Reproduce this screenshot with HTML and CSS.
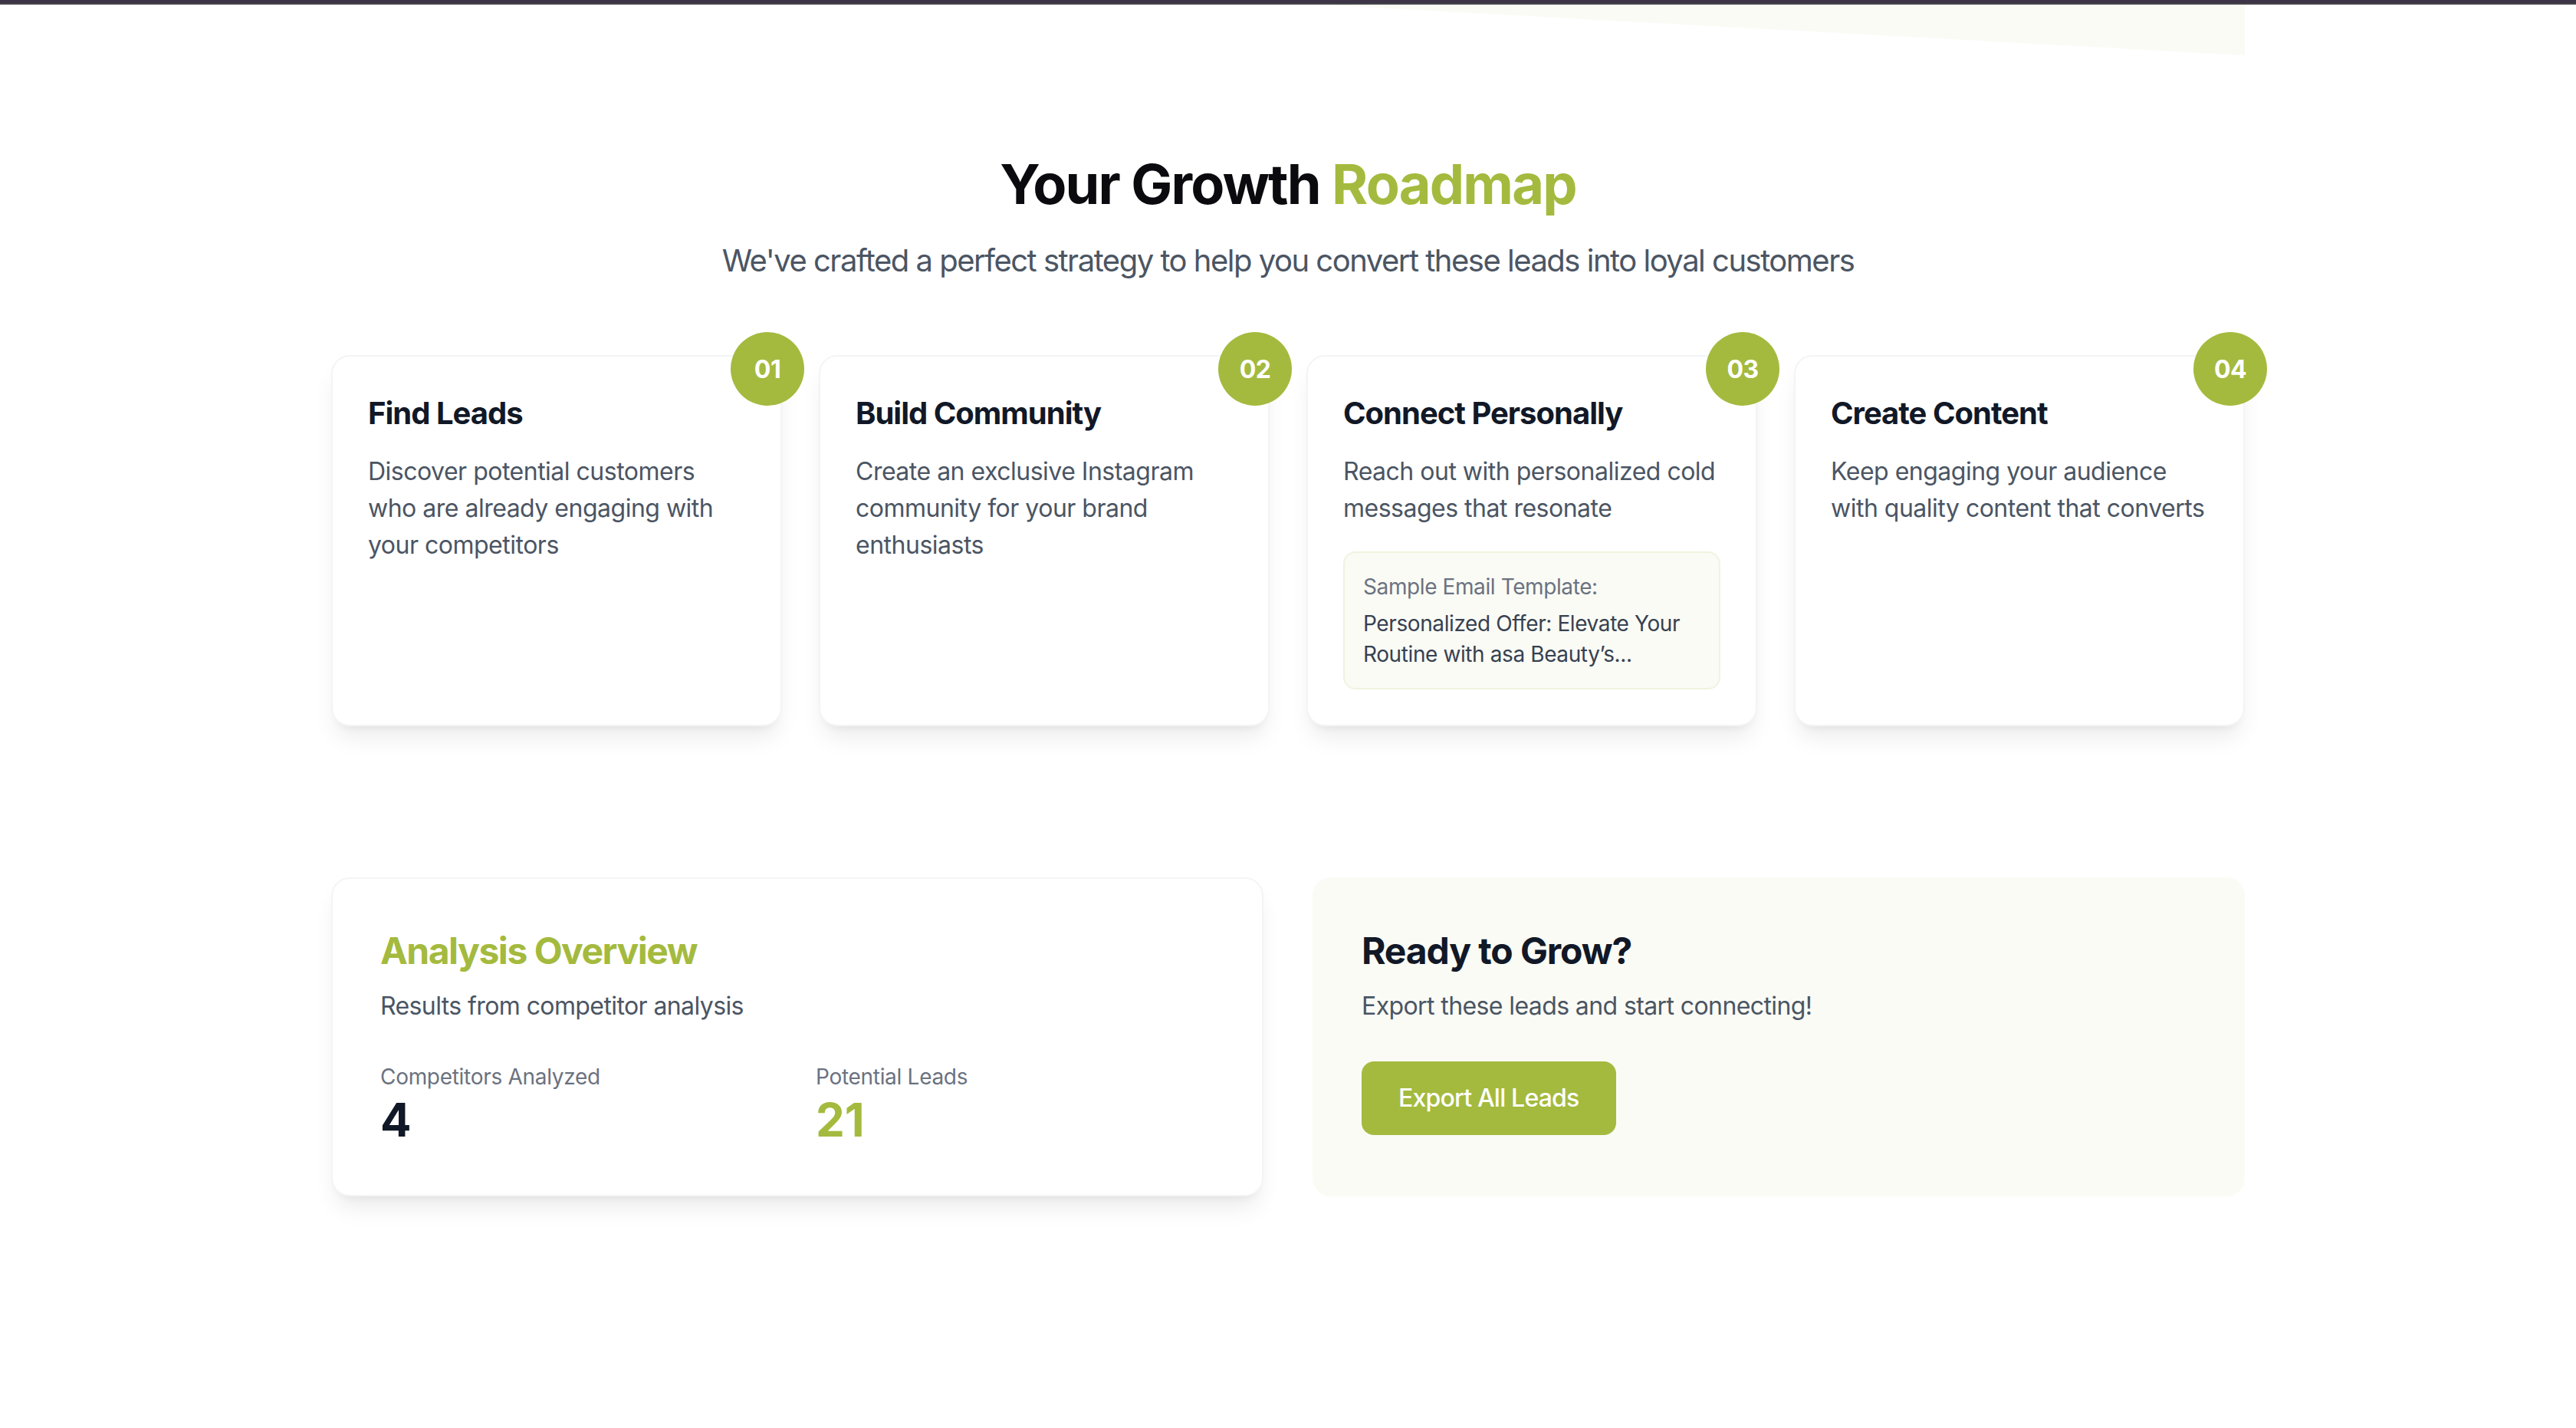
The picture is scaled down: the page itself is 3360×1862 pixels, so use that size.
FILE: index.html
```html
<!DOCTYPE html>
<html lang="en">
<head>
<meta charset="utf-8">
<title>Your Growth Roadmap</title>
<link rel="stylesheet" href="styles.css">
</head>
<body>
<div class="page">
  <div class="topbar"></div>
  <div class="deco"></div>
  <main class="container">
    <header class="intro">
      <h1 class="title">Your Growth <span class="accent">Roadmap</span></h1>
      <p class="subtitle">We've crafted a perfect strategy to help you convert these leads into loyal customers</p>
    </header>

    <section class="steps">
      <article class="step">
        <div class="badge">01</div>
        <h3 class="step-title">Find Leads</h3>
        <p class="step-text">Discover potential customers who are already engaging with your competitors</p>
      </article>
      <article class="step">
        <div class="badge">02</div>
        <h3 class="step-title">Build Community</h3>
        <p class="step-text">Create an exclusive Instagram community for your brand enthusiasts</p>
      </article>
      <article class="step">
        <div class="badge">03</div>
        <h3 class="step-title">Connect Personally</h3>
        <p class="step-text">Reach out with personalized cold messages that resonate</p>
        <div class="sample">
          <p class="sample-label">Sample Email Template:</p>
          <p class="sample-text">Personalized Offer: Elevate Your Routine with asa Beauty’s...</p>
        </div>
      </article>
      <article class="step">
        <div class="badge">04</div>
        <h3 class="step-title">Create Content</h3>
        <p class="step-text">Keep engaging your audience with quality content that converts</p>
      </article>
    </section>

    <section class="bottom">
      <div class="overview">
        <h2 class="overview-title">Analysis Overview</h2>
        <p class="muted">Results from competitor analysis</p>
        <div class="stats">
          <div class="stat">
            <p class="stat-label">Competitors Analyzed</p>
            <p class="stat-value">4</p>
          </div>
          <div class="stat">
            <p class="stat-label">Potential Leads</p>
            <p class="stat-value accent">21</p>
          </div>
        </div>
      </div>
      <div class="cta">
        <h2 class="cta-title">Ready to Grow?</h2>
        <p class="muted">Export these leads and start connecting!</p>
        <button class="btn" type="button">Export All Leads</button>
      </div>
    </section>
  </main>
</div>
</body>
</html>
```

FILE: styles.css
```css
* { box-sizing: border-box; }

html, body {
  margin: 0;
  padding: 0;
  background: #ffffff;
}

body {
  font-family: Inter, "Noto Sans", "Liberation Sans", sans-serif;
  color: #111827;
  -webkit-font-smoothing: antialiased;
}

p, h1, h2, h3 { margin: 0; }

.page {
  position: relative;
  min-height: 1862px;
}

.topbar {
  position: relative;
  z-index: 2;
  height: 6px;
  background: #3e3448;
  border-bottom: 2px solid #47454b;
}

.deco {
  position: absolute;
  top: 0;
  left: 50%;
  right: calc(50% - 1248px);
  height: 72px;
  background: rgba(164, 186, 62, 0.05);
  clip-path: polygon(0 0, 100% 0, 100% 100%, 0 5%);
  z-index: 1;
}

.container {
  position: relative;
  z-index: 1;
  max-width: 2560px;
  margin: 0 auto;
  padding: 194px 32px 0;
}

.accent { color: #a4ba3e; }

.intro {
  text-align: center;
  margin-bottom: 95px;
}

.title {
  font-size: 72px;
  line-height: 80px;
  font-weight: 700;
  color: #0b0b0f;
  letter-spacing: -1.8px;
  margin-bottom: 32px;
}

.subtitle {
  font-size: 40px;
  line-height: 56px;
  color: #4b5563;
  letter-spacing: -1.5px;
}

.steps {
  display: grid;
  grid-template-columns: repeat(4, 1fr);
  gap: 48px;
}

.step {
  position: relative;
  background: #ffffff;
  border: 2px solid #f3f4f6;
  border-radius: 24px;
  padding: 46px;
  box-shadow: 0 20px 30px -6px rgba(0, 0, 0, 0.08), 0 8px 12px -8px rgba(0, 0, 0, 0.08);
}

.badge {
  position: absolute;
  top: -32px;
  right: -31px;
  width: 96px;
  height: 96px;
  border-radius: 50%;
  background: #a4ba3e;
  color: #ffffff;
  font-weight: 700;
  font-size: 32px;
  letter-spacing: -0.5px;
  display: flex;
  align-items: center;
  justify-content: center;
}

.step-title {
  font-size: 40px;
  line-height: 56px;
  font-weight: 700;
  color: #111827;
  letter-spacing: -1px;
  margin-bottom: 24px;
}

.step-text {
  font-size: 32px;
  line-height: 48px;
  color: #4b5563;
  letter-spacing: -0.5px;
}

.sample {
  margin-top: 32px;
  background: rgba(164, 186, 62, 0.05);
  border: 2px solid rgba(164, 186, 62, 0.12);
  border-radius: 16px;
  padding: 24px;
}

.sample-label {
  font-size: 28px;
  line-height: 40px;
  color: #6b7280;
  letter-spacing: -0.4px;
  margin-bottom: 8px;
}

.sample-text {
  font-size: 28px;
  line-height: 40px;
  color: #374151;
  letter-spacing: -0.4px;
}

.bottom {
  margin-top: 197px;
  display: grid;
  grid-template-columns: 1fr 1fr;
  gap: 64px;
}

.overview {
  background: #ffffff;
  border: 2px solid #f3f4f6;
  border-radius: 24px;
  padding: 62px;
  box-shadow: 0 20px 30px -6px rgba(0, 0, 0, 0.08), 0 8px 12px -8px rgba(0, 0, 0, 0.08);
}

.overview-title {
  font-size: 48px;
  line-height: 64px;
  font-weight: 700;
  color: #a4ba3e;
  letter-spacing: -1.5px;
  margin-bottom: 16px;
}

.muted {
  font-size: 32px;
  line-height: 48px;
  color: #4b5563;
  letter-spacing: -0.6px;
}

.stats {
  margin-top: 48px;
  display: grid;
  grid-template-columns: 1fr 1fr;
  gap: 48px;
}

.stat-label {
  font-size: 28px;
  line-height: 40px;
  color: #6b7280;
  letter-spacing: -0.3px;
}

.stat-value {
  font-size: 60px;
  line-height: 72px;
  font-weight: 700;
  color: #111827;
}

.stat-value.accent { color: #a4ba3e; }

.cta {
  background: rgba(164, 186, 62, 0.05);
  border-radius: 24px;
  padding: 64px;
}

.cta-title {
  font-size: 48px;
  line-height: 64px;
  font-weight: 700;
  color: #111827;
  letter-spacing: -1.1px;
  margin-bottom: 16px;
}

.btn {
  margin-top: 48px;
  display: inline-block;
  background: #a4ba3e;
  color: #ffffff;
  border: 0;
  border-radius: 16px;
  padding: 24px 48px;
  font-family: inherit;
  font-size: 32px;
  line-height: 48px;
  font-weight: 500;
  letter-spacing: -0.8px;
  cursor: pointer;
}
```
